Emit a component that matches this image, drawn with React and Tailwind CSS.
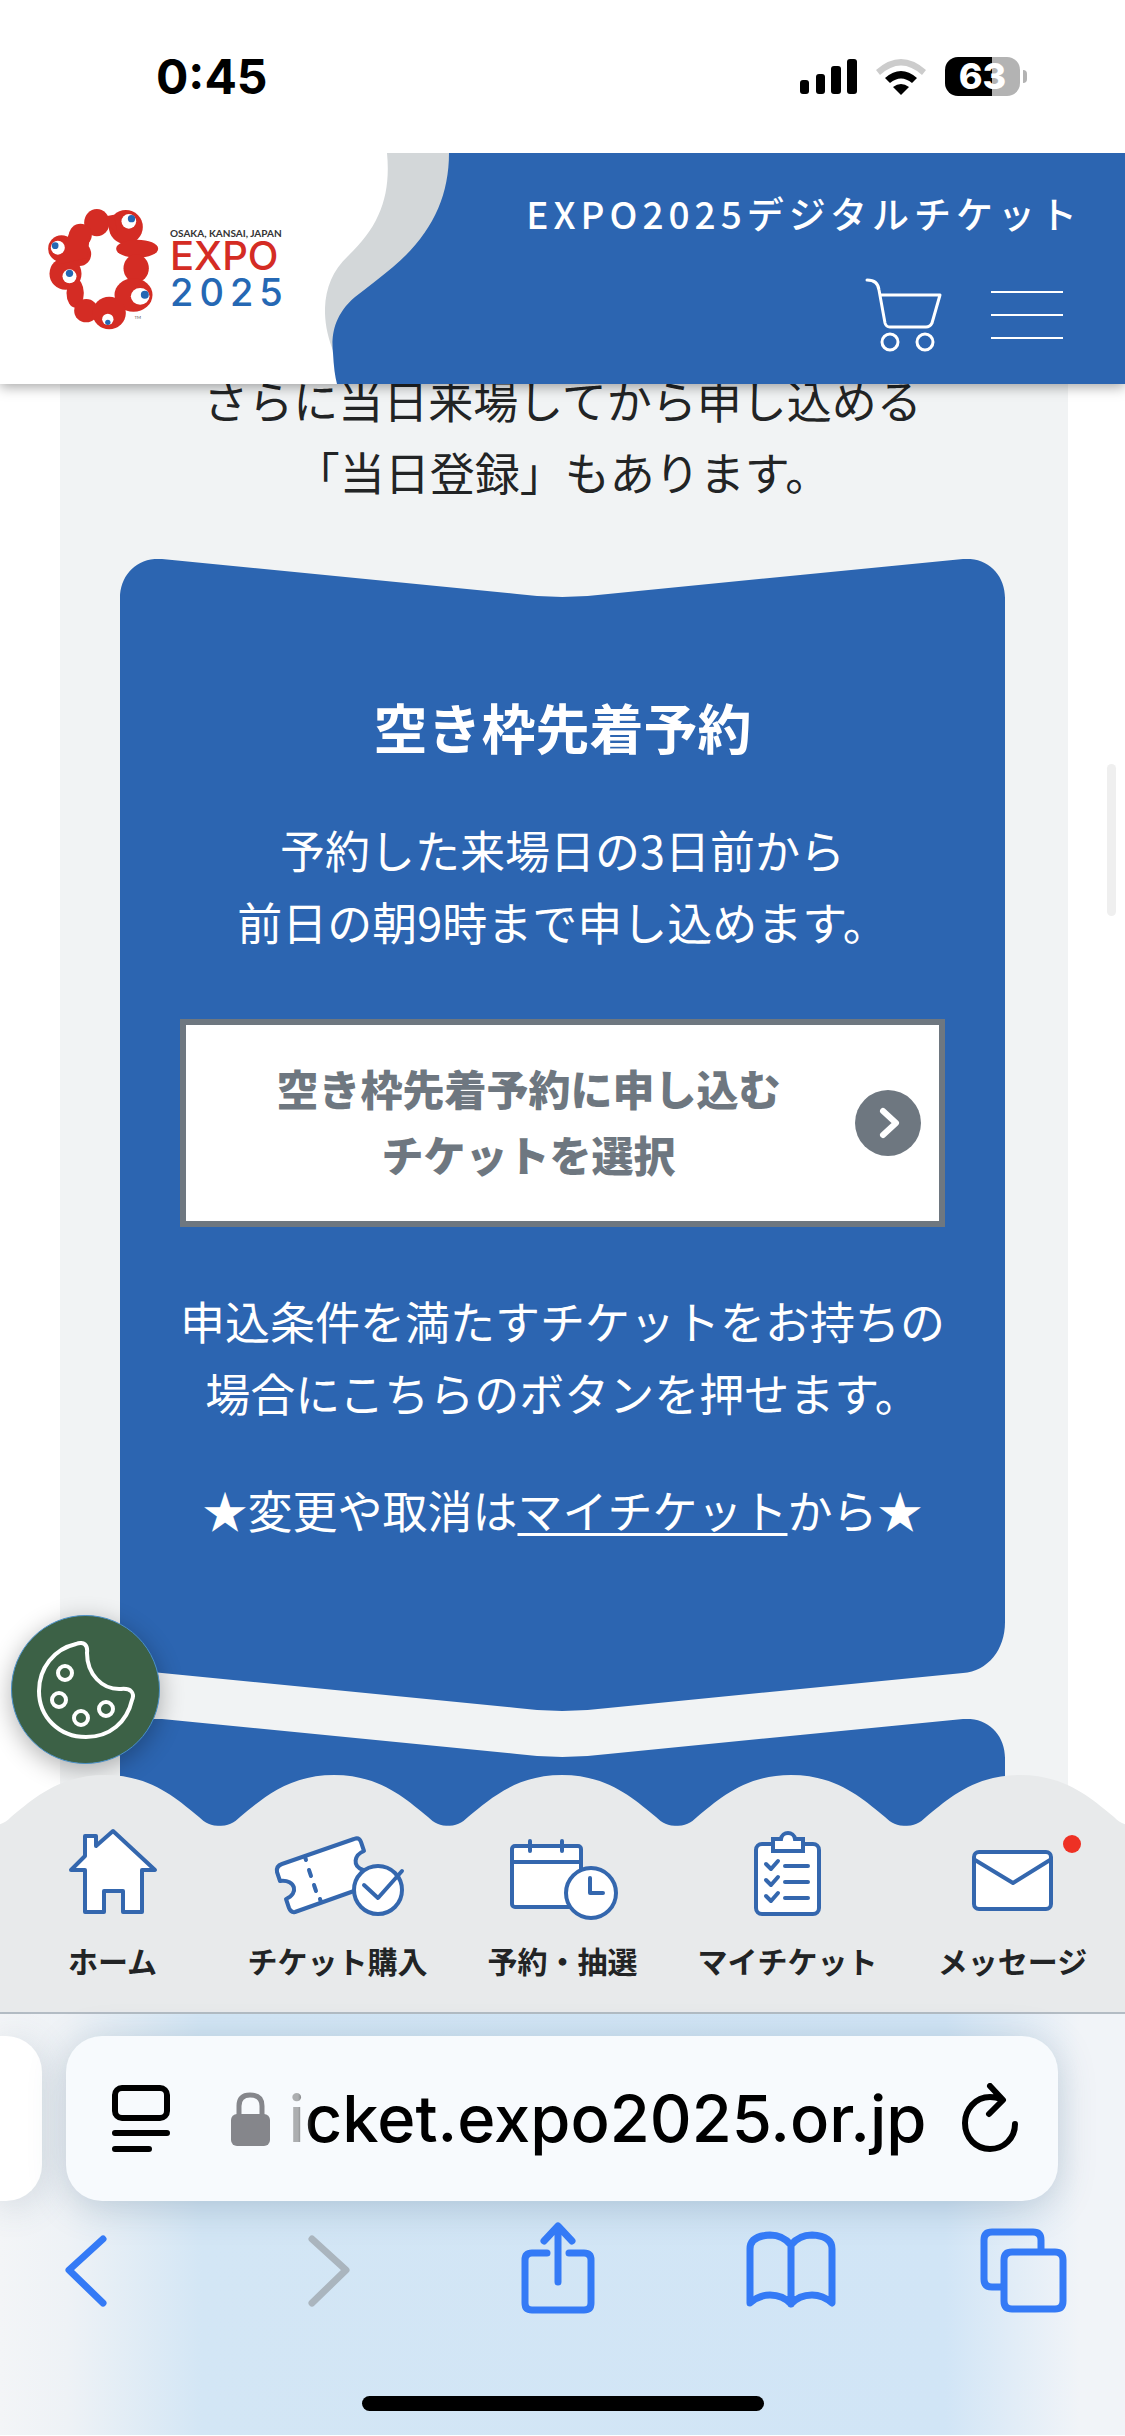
const BLUE = '#2c65b1'

function StatusBar() {
  return (
    <div className="relative z-20 flex h-[153px] items-center justify-between bg-white pl-[156px] pr-[98px] font-['Inter',sans-serif]">
      <span className="text-[48px] leading-[56px] font-bold text-black">0:45</span>
      <div className="flex items-center gap-[19px]">
        <svg width="57" height="36" viewBox="0 0 57 36" aria-hidden="true">
          <rect x="0" y="21" width="9" height="14" rx="3" />
          <rect x="16" y="15" width="9" height="20" rx="3" />
          <rect x="31" y="7" width="10" height="28" rx="3" />
          <rect x="47" y="0" width="10" height="35" rx="3" />
        </svg>
        <svg width="50" height="36" viewBox="0 0 50 36" aria-hidden="true">
          <path d="M0 11 Q25 -11 50 11 L46 16 Q25 -3 4 16 Z" fill="#cccccc" />
          <path d="M9 19 Q25 5 41 19 L36 24 Q25 15 14 24 Z" />
          <path d="M17 28 Q25 22 33 28 L25 36 Z" />
        </svg>
        <div className="flex items-center gap-[3px]">
          <div className="flex h-[39px] w-[75px] items-center justify-center rounded-[13px] bg-[linear-gradient(to_right,#000_63%,#b3b3b3_63%)] text-[36px] leading-[39px] font-extrabold text-white">
            63
          </div>
          <div className="h-[13px] w-[4px] rounded-r-full bg-[#b3b3b3]" />
        </div>
      </div>
    </div>
  )
}

function Logo() {
  return (
    <a href="#top" aria-label="EXPO 2025" className="flex items-center gap-[10px]">
      <svg width="113" height="122" viewBox="50 50 338 366" aria-hidden="true">
        <g fill="#d42c24">
          <ellipse cx="199" cy="94" rx="38" ry="41" />
          <ellipse cx="286" cy="107" rx="51" ry="51" />
          <ellipse cx="150" cy="131" rx="34" ry="34" />
          <ellipse cx="147" cy="188" rx="35" ry="36" />
          <ellipse cx="93" cy="172" rx="40" ry="40" />
          <ellipse cx="105" cy="247" rx="48" ry="48" />
          <ellipse cx="320" cy="172" rx="63" ry="27" />
          <ellipse cx="317" cy="231" rx="38" ry="42" />
          <ellipse cx="134" cy="305" rx="26" ry="44" />
          <ellipse cx="309" cy="311" rx="57" ry="50" />
          <ellipse cx="167" cy="358" rx="36" ry="35" />
          <ellipse cx="236" cy="365" rx="50" ry="49" />
          <path d="M118 120 L180 120 L170 200 L80 220 Z" />
          <path d="M226 75 L250 70 L262 130 L235 100 Z" />
        </g>
        <g fill="#fff">
          <circle cx="295" cy="90" r="22" />
          <circle cx="82" cy="169" r="21" />
          <circle cx="117" cy="255" r="21" />
          <ellipse cx="329" cy="315" rx="28" ry="25" />
          <circle cx="232" cy="384" r="17" />
        </g>
        <g fill="#2568b4">
          <circle cx="303" cy="82" r="11" />
          <circle cx="74" cy="163" r="10" />
          <circle cx="117" cy="246" r="11" />
          <circle cx="343" cy="310" r="12" />
          <circle cx="232" cy="393" r="8" />
        </g>
        <text x="312" y="382" fontSize="13" fill="#555" fontFamily="Lato">TM</text>
      </svg>
      <div className="flex flex-col font-['Inter',sans-serif]">
        <span className="font-['Lato',sans-serif] text-[10px] leading-[10px] font-bold text-[#333]">OSAKA, KANSAI, JAPAN</span>
        <span className="text-[40px] leading-[36px] font-medium text-[#d42c24]">EXPO</span>
        <span className="text-[38px] leading-[36px] font-medium tracking-[6px] text-[#2568b4]">2025</span>
      </div>
    </a>
  )
}

function Header() {
  return (
    <header className="relative z-10 flex h-[231px] bg-white shadow-[0_3px_12px_rgba(0,0,0,0.35)]">
      <div className="flex w-[325px] shrink-0 items-center pl-[47px]">
        <Logo />
      </div>
      <svg className="-mr-px h-full w-[126px] shrink-0" viewBox="0 0 126 231" preserveAspectRatio="none" aria-hidden="true">
        <path d="M62 0 C66 42 55 73 23 103 C-3 127 -6 164 9 200 H126 V0 Z" fill="#d3d7d9" />
        <path d="M124 0 C124 45 106 82 68 114 Q51 128 30 144 C5 165 7 190 8 200 Q9 220 12 231 H126 V0 Z" fill={BLUE} />
      </svg>
      <div className="flex flex-1 flex-col items-end bg-[#2c65b1] pt-[36px] text-white">
        <p className="pr-[43px] text-[37px] leading-[48px] font-medium tracking-[5px] whitespace-nowrap">EXPO2025デジタルチケット</p>
        <div className="flex items-center gap-[48px] pt-[41px] pr-[62px]">
          <button type="button" aria-label="カート">
            <svg className="block" width="78" height="74" viewBox="0 0 78 74" fill="none" stroke="currentColor" strokeWidth="3" strokeLinecap="round" strokeLinejoin="round">
              <path d="M2 2 Q13 2 14 12 L20 45 Q21 49 25 49 H61 Q65 49 67 45 L75 17 H15" />
              <circle cx="25" cy="64" r="8" />
              <circle cx="60" cy="64" r="8" />
            </svg>
          </button>
          <button type="button" aria-label="メニュー" className="flex flex-col gap-[21px]">
            <span className="h-[2px] w-[72px] bg-white" />
            <span className="h-[2px] w-[72px] bg-white" />
            <span className="h-[2px] w-[72px] bg-white" />
          </button>
        </div>
      </div>
    </header>
  )
}

function CardTop() {
  return (
    <svg className="block h-[39px] w-full" viewBox="0 0 885 39" preserveAspectRatio="none" aria-hidden="true">
      <path d="M0 39 C0 16 17 -2 42 0 L397 35 Q442 41 488 35 L843 0 C868 -2 885 16 885 39 Z" fill={BLUE} />
    </svg>
  )
}

function CardBottom() {
  return (
    <svg className="block h-[89px] w-full" viewBox="0 0 885 89" preserveAspectRatio="none" aria-hidden="true">
      <path d="M0 0 C0 28 17 49 42 51 L397 86 Q442 92 488 86 L843 51 C868 49 885 28 885 0 Z" fill={BLUE} />
    </svg>
  )
}

function VacancyCard() {
  return (
    <section>
      <CardTop />
      <div className="-my-px bg-[#2c65b1] px-[60px] pt-[94px] pb-[77px] text-center text-[45px] leading-[72px] text-white">
        <h2 className="text-[54px] font-bold">空き枠先着予約</h2>
        <p className="mt-[51px]">予約した来場日の3日前から<br />前日の朝9時まで申し込めます。</p>
        <button type="button" className="mt-[61px] flex w-full items-center border-[6px] border-[#6e7780] bg-white py-[30px] pr-[18px] pl-[16px] text-[#6e7780]">
          <span className="flex-1 pb-[4px] text-[42px] leading-[66px] font-black">空き枠先着予約に申し込む<br />チケットを選択</span>
          <svg className="shrink-0" width="66" height="66" viewBox="0 0 66 66" aria-hidden="true">
            <circle cx="33" cy="33" r="33" fill="#6e7780" />
            <path d="M28 21 L41 33 L28 45" fill="none" stroke="#fff" strokeWidth="6" strokeLinecap="round" strokeLinejoin="round" />
          </svg>
        </button>
        <p className="-mx-4 mt-[58px]">申込条件を満たすチケットをお持ちの<br />場合にこちらのボタンを押せます。</p>
        <p className="mt-[45px]">★変更や取消は<a href="#mytickets" className="underline decoration-3 underline-offset-4">マイチケット</a>から★</p>
      </div>
      <CardBottom />
    </section>
  )
}

function CookieButton() {
  return (
    <button type="button" aria-label="Cookie" className="absolute bottom-[62px] left-[11px] flex h-[149px] w-[149px] items-center justify-center rounded-full border border-[#4a90c8] bg-[#3c6146] shadow-[0_6px_24px_rgba(0,0,0,0.3)]">
      <svg width="98" height="98" viewBox="0 0 98 98" fill="none" stroke="#fff" strokeWidth="4" strokeLinejoin="round">
        <path d="M39 3 C47 0 51 4 50 12 C50 33 65 49 84 48 C94 47 98 52 95 59 C90 81 73 96 49 96 C22 96 2 76 2 50 C2 27 17 8 39 3 Z" />
        <circle cx="28" cy="32" r="7" />
        <circle cx="22" cy="59" r="7" />
        <circle cx="44" cy="77" r="7" />
        <circle cx="69" cy="68" r="7" />
      </svg>
    </button>
  )
}

function HomeIcon() {
  return (
    <path d="M72 5 L114 44 H101 V86 H82 V65 H63 V86 H44 V44 H30 L44 30 V10 H55 V20 Z" />
  )
}

function BuyIcon() {
  return (
    <>
      <path d="M14 55 L11 46 Q10 40 16 38 L88 13 Q93 11 95 16 L98 25 C88 29 86 40 97 44 L110 57 L88 65 L29 86 Q25 87 23 82 L20 73 C33 68 30 53 14 55 Z" />
      <path d="M39 31 L40 34 M43 44 L45 50 M48 59 L50 65 M54 73 L55 76" />
      <circle cx="112" cy="64" r="24" />
      <path d="M98 59 L112 72 L136 45" fill="none" />
    </>
  )
}

function CalendarIcon() {
  return (
    <>
      <rect x="21" y="20" width="69" height="61" rx="3" />
      <path d="M21 36 H90 M39 15 V25 M71 15 V25" />
      <circle cx="100" cy="67" r="25" />
      <path d="M99 52 V67 H112" fill="none" />
    </>
  )
}

function TicketListIcon() {
  return (
    <>
      <rect x="40" y="18" width="63" height="70" rx="6" />
      <path d="M57 13 H65 C66 5 78 5 79 13 H87 V25 H57 Z" strokeLinejoin="miter" />
      <path d="M50 38 L55 43 L62 35 M50 54 L55 59 L62 51 M50 70 L55 75 L62 67" fill="none" />
      <path d="M69 40 H92 M69 56 H92 M69 72 H92" />
    </>
  )
}

function MailIcon() {
  return (
    <>
      <rect x="33" y="26" width="77" height="57" rx="5" />
      <path d="M34 34 L72 57 L109 34" />
      <circle cx="131" cy="18" r="9" fill="#ee3124" stroke="none" />
    </>
  )
}

const NAV_ITEMS = [
  { label: 'ホーム', href: '#home', Icon: HomeIcon },
  { label: 'チケット購入', href: '#buy', Icon: BuyIcon },
  { label: '予約・抽選', href: '#reserve', Icon: CalendarIcon },
  { label: 'マイチケット', href: '#mytickets', Icon: TicketListIcon },
  { label: 'メッセージ', href: '#messages', Icon: MailIcon },
]

// wave peaks, one per nav item
const PEAKS = [105, 334, 562, 791, 1020]

function BottomNav() {
  const wave = PEAKS.map(x =>
    `M${x - 116} 52 V51 C${x - 106} 51 ${x - 100} 48 ${x - 94} 42 C${x - 72} 24 ${x - 46} 0 ${x} 0 C${x + 46} 0 ${x + 72} 24 ${x + 94} 42 C${x + 100} 48 ${x + 106} 51 ${x + 116} 51 V52 Z`
  ).join(' ')
  return (
    <nav className="relative -mt-[51px]">
      <svg className="block h-[52px] w-full" viewBox="0 0 1125 52" preserveAspectRatio="none" aria-hidden="true">
        <path d={wave} fill="#e8eaeb" />
      </svg>
      <ul className="-mt-px grid grid-cols-5 bg-[#e8eaeb] pb-[32px]">
        {NAV_ITEMS.map(({ label, href, Icon }) => (
          <li key={label}>
            <a href={href} className="flex flex-col items-center gap-[18px] text-[30px] leading-[40px] font-bold whitespace-nowrap text-[#222425]">
              <svg width="144" height="96" viewBox="0 0 144 96" fill="#fff" stroke="#3467ae" strokeWidth="4" strokeLinecap="round" strokeLinejoin="round" aria-hidden="true">
                <Icon />
              </svg>
              {label}
            </a>
          </li>
        ))}
      </ul>
    </nav>
  )
}

const TOOLS = [
  { label: '戻る', color: 'text-[#347af6]', path: 'M65 18 L31 49 L65 82' },
  { label: '進む', color: 'text-[#aab5be]', path: 'M40 18 L74 49 L40 82' },
  { label: '共有', color: 'text-[#347af6]', path: 'M40 32 H25 Q18 32 18 39 V82 Q18 89 25 89 H77 Q84 89 84 82 V39 Q84 32 77 32 H62 M51 61 V6 M37 20 L51 5 L65 20' },
  { label: 'ブックマーク', color: 'text-[#347af6]', path: 'M50 24 Q42 14 29 14 Q9 15 9 28 V82 Q18 74 29 74 Q42 74 50 83 Q58 74 71 74 Q82 74 91 82 V28 Q91 15 71 14 Q58 14 50 24 V83' },
  { label: 'タブ', color: 'text-[#347af6]', path: 'M25 66 H17 Q9 66 9 58 V19 Q9 11 17 11 H58 Q66 11 66 19 V31 M37 31 H80 Q88 31 88 39 V80 Q88 88 80 88 H37 Q29 88 29 80 V39 Q29 31 37 31 Z' },
]

function BrowserBar() {
  return (
    <footer className="relative border-t-2 border-[#b3bcc4] bg-[linear-gradient(to_right,#f3f5f7_0%,#eef2f6_6%,#d3e6f5_18%,#d1e5f6_84%,#f1f4f8_96%)] pt-[22px] pb-[24px]">
      <div className="flex gap-[24px] pr-[67px]">
        <div className="w-[42px] rounded-r-[36px] bg-white shadow-[0_6px_36px_rgba(60,90,120,0.2)]" />
        <div className="flex h-[165px] flex-1 items-center rounded-[36px] bg-[#f7fafd] pr-[39px] pl-[45px] text-black shadow-[0_6px_36px_rgba(60,90,120,0.25)]">
          <button type="button" aria-label="ページメニュー">
            <svg className="block" width="60" height="68" viewBox="0 0 60 68" fill="none" stroke="currentColor" strokeWidth="6" strokeLinecap="round">
              <rect x="4" y="3" width="52" height="30" rx="7" />
              <path d="M4 48 H56 M4 64 H38" />
            </svg>
          </button>
          <button type="button" className="flex flex-1 items-center justify-center gap-[18px] pl-[26px] font-['Inter',sans-serif] text-[65px] leading-[80px] font-medium">
            <svg width="39" height="54" viewBox="0 0 39 54" aria-hidden="true">
              <rect x="0" y="22" width="39" height="32" rx="6" fill="#85868b" />
              <path d="M8 24 V14 Q8 3 19 3 Q31 3 31 14 V24" fill="none" stroke="#85868b" strokeWidth="5" />
            </svg>
            <span className="[mask-image:linear-gradient(to_right,rgba(0,0,0,0.3)_10px,#000_24px)]">icket.expo2025.or.jp</span>
          </button>
          <button type="button" aria-label="再読み込み">
            <svg className="block" width="58" height="72" viewBox="0 0 58 72" fill="none" stroke="currentColor" strokeWidth="6" strokeLinecap="round" strokeLinejoin="round">
              <path d="M40 16 Q35 14 29 14 C14 14 4 27 4 40 C4 55 15 66 29 66 C43 66 54 55 54 41 M29 3 L42 17 L28 31" />
            </svg>
          </button>
        </div>
      </div>
      <div className="mt-[20px] flex justify-between pr-[48px] pl-[38px]">
        {TOOLS.map(tool => (
          <button key={tool.label} type="button" aria-label={tool.label} className={tool.color}>
            <svg className="block" width="102" height="96" viewBox="0 0 102 96" fill="none" stroke="currentColor" strokeWidth="7" strokeLinecap="round" strokeLinejoin="round">
              <path d={tool.path} />
            </svg>
          </button>
        ))}
      </div>
      <div className="mx-auto mt-[79px] h-[15px] w-[402px] rounded-full bg-black" />
    </footer>
  )
}

export default function App() {
  return (
    <div className="bg-white font-['Noto_Sans_CJK_JP',sans-serif]">
      <StatusBar />
      <Header />
      <main className="relative pr-[57px] pl-[60px]">
        <div className="-mt-[20px] bg-[#f1f3f4] pr-[63px] pl-[60px]">
          <p className="pb-[51px] text-center text-[45px] leading-[72px] text-[#222425]">さらに当日来場してから申し込める<br />「当日登録」もあります。</p>
          <VacancyCard />
          <div className="pt-[8px]">
            <CardTop />
            <div className="-mt-px h-[69px] bg-[#2c65b1]" />
          </div>
        </div>
        <div className="absolute top-[400px] right-[9px] h-[152px] w-[9px] rounded-full bg-[#efefef]" />
        <CookieButton />
      </main>
      <BottomNav />
      <BrowserBar />
    </div>
  )
}
